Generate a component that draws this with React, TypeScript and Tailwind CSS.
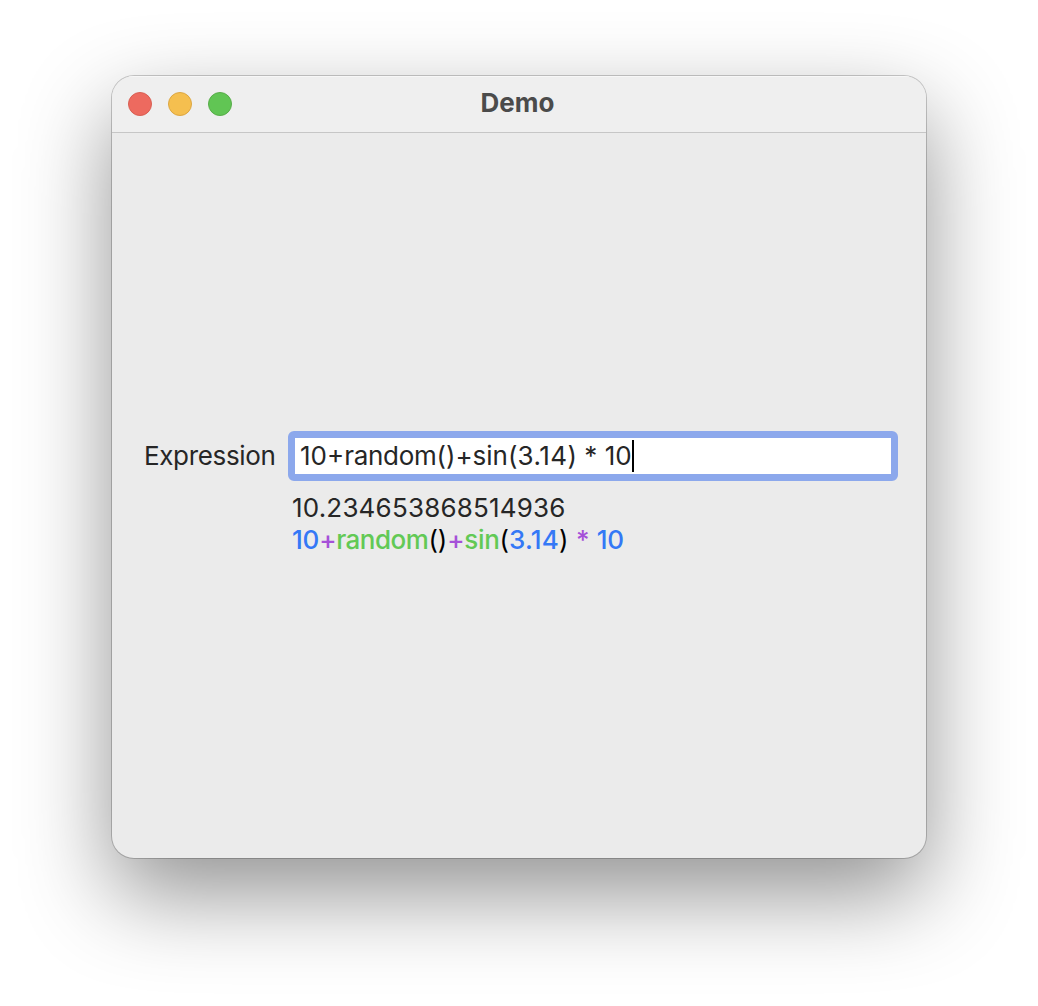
export default function App() {
  return (
    <div className="flex h-[1006px] w-[1038px] items-start overflow-hidden bg-white pl-[112px] pt-[76px] font-['Inter',sans-serif]">
      <main className="flex h-[782px] w-[814px] flex-col overflow-hidden rounded-[22px] bg-[#ebebeb] shadow-[0_0_0_1px_rgba(0,0,0,0.2),0_36px_90px_rgba(0,0,0,0.43)]">
        <header className="grid h-[57px] shrink-0 grid-cols-[1fr_auto_1fr] items-center border-b border-[#c6c6c6] bg-[#efefef] shadow-[inset_0_1px_0_#f7f7f7]">
          <div className="flex gap-4 pl-4">
            <span className="size-6 rounded-full border border-[#d85f53] bg-[#ed6a5f]" />
            <span className="size-6 rounded-full border border-[#dca642] bg-[#f5bf4f]" />
            <span className="size-6 rounded-full border border-[#58ac49] bg-[#61c554]" />
          </div>
          <h1 className="-mt-0.5 mr-[3px] text-[26px] font-bold leading-8 text-[#4b4b4b]">Demo</h1>
        </header>
        <section className="flex flex-col pl-8 pt-[298px] text-[26px] leading-8 text-[#262626]">
          <div className="flex items-center">
            <label htmlFor="expression" className="w-[144px] whitespace-nowrap tracking-[-0.35px]"><span>Expression</span></label>
            <div id="expression" className="flex h-[50px] w-[610px] items-center rounded-md border-[6px] border-[#8ca8ec] bg-white pl-[6px] shadow-[inset_0_0_0_1px_#8ca8ec]">
              <span className="whitespace-pre">10+<span className="tracking-[-0.3px]">random</span>()+sin(<span className="tracking-[0.5px]">3.14</span>) * 10</span>
              <span className="h-8 w-[2px] bg-black" />
            </div>
          </div>
          <div className="pl-[148px] pt-[11px]">
            <p><span className="tracking-[0.18px]">10.234653868514936</span></p>
            <p className="whitespace-pre text-black"><span><span className="font-[450] tracking-[-0.2px] text-[#3478f6]">10</span><span className="font-medium tracking-[-0.4px] text-[#a550d8]">+</span><span className="font-[450] tracking-[-0.5px] text-[#62c955]">random</span>()<span className="font-medium tracking-[-0.4px] text-[#a550d8]">+</span><span className="font-[450] tracking-[-0.3px] text-[#62c955]">sin</span>(<span className="font-[450] tracking-[0.2px] text-[#3478f6]">3.14</span>) <span className="font-medium text-[#a550d8]">*</span> <span className="font-[450] tracking-[-0.2px] text-[#3478f6]">10</span></span></p>
          </div>
        </section>
      </main>
    </div>
  );
}
